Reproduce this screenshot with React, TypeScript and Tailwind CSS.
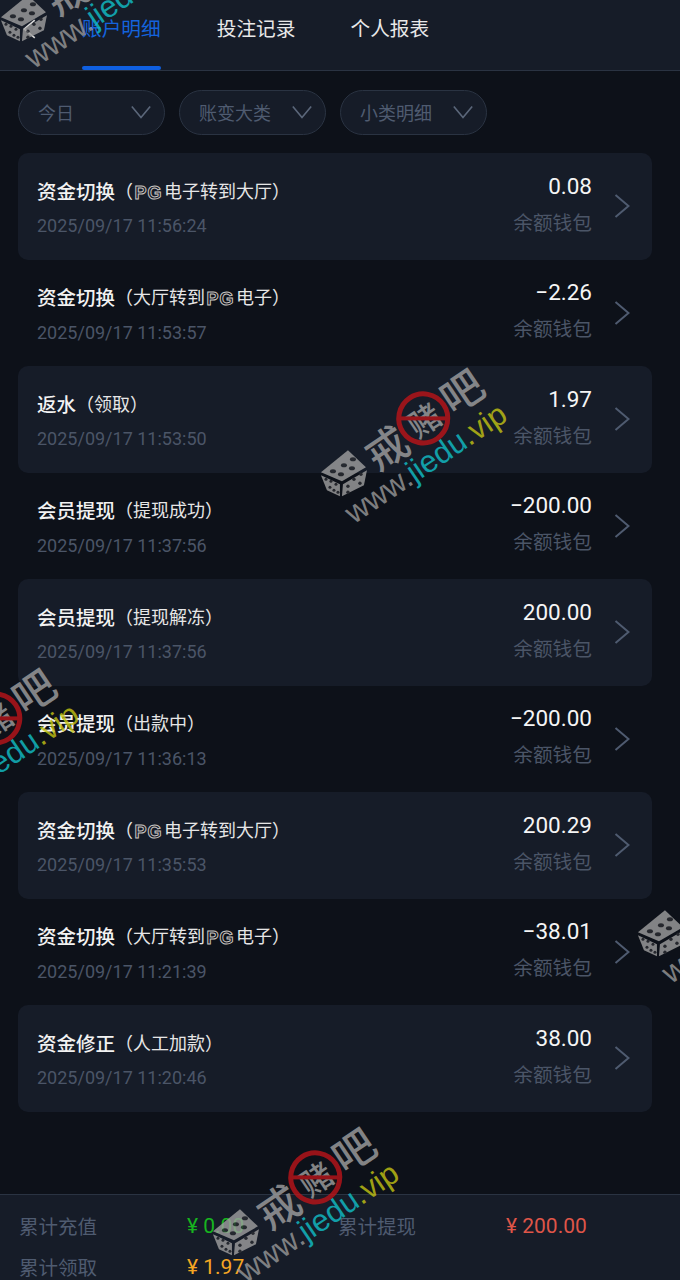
const ROWS = [
  { title: '资金切换', kind: 'out', time: '2025/09/17 11:56:24', amount: '0.08' },
  { title: '资金切换', kind: 'in', time: '2025/09/17 11:53:57', amount: '−2.26' },
  { title: '返水', note: '（领取）', time: '2025/09/17 11:53:50', amount: '1.97' },
  { title: '会员提现', note: '（提现成功）', time: '2025/09/17 11:37:56', amount: '−200.00' },
  { title: '会员提现', note: '（提现解冻）', time: '2025/09/17 11:37:56', amount: '200.00' },
  { title: '会员提现', note: '（出款中）', time: '2025/09/17 11:36:13', amount: '−200.00' },
  { title: '资金切换', kind: 'out', time: '2025/09/17 11:35:53', amount: '200.29' },
  { title: '资金切换', kind: 'in', time: '2025/09/17 11:21:39', amount: '−38.01' },
  { title: '资金修正', note: '（人工加款）', time: '2025/09/17 11:20:46', amount: '38.00' },
]

const WATERMARKS = [
  'left-[-10px] top-[-62px]',
  'left-[310px] top-[393px]',
  'left-[-118px] top-[693px]',
  'left-[202px] top-[1152px]',
  'left-[627px] top-[853px]',
]

function PgLogo() {
  return (
    <span className="inline-block w-[31px] text-center align-[-1px] font-['Liberation_Sans',sans-serif] text-[18px] leading-none font-bold tracking-[1px] text-transparent [-webkit-text-stroke:1px_#c9c4c0]">
      PG
    </span>
  )
}

function Chevron({ className }: { className: string }) {
  return (
    <svg className={className} viewBox="0 0 16 24" fill="none" stroke="currentColor" strokeWidth="2">
      <path d="M1.5 1 L14.5 12 L1.5 23" />
    </svg>
  )
}

function Dice() {
  return (
    <svg className="h-[50px] w-[50px] shrink-0 rotate-[34deg]" viewBox="0 0 50 50">
      <path d="M2 23 L29 1 L47 18 L23 32 Z" fill="#a0a0a0" />
      <path d="M2 26 L21 35 L21 47 L8 41 Z" fill="#a0a0a0" />
      <path d="M24 35 L48 21 L45 36 L23 47 Z" fill="#a0a0a0" />
      <g fill="#2b2d33">
        <ellipse cx="14" cy="22" rx="3" ry="2" />
        <ellipse cx="25" cy="16" rx="3" ry="2" />
        <ellipse cx="34" cy="10" rx="3" ry="2" />
        <ellipse cx="22" cy="25" rx="3" ry="2" />
        <ellipse cx="33" cy="19" rx="3" ry="2" />
        <circle cx="7" cy="30" r="1.5" />
        <circle cx="12" cy="32" r="1.5" />
        <circle cx="17" cy="35" r="1.5" />
        <circle cx="11" cy="38" r="1.5" />
        <circle cx="15" cy="41" r="1.5" />
        <circle cx="19" cy="43" r="1.5" />
        <circle cx="29" cy="37" r="1.7" />
        <circle cx="35" cy="30" r="1.7" />
        <circle cx="42" cy="25" r="1.7" />
        <circle cx="29" cy="43" r="1.7" />
        <circle cx="41" cy="34" r="1.7" />
      </g>
    </svg>
  )
}

function Watermark({ place }: { place: string }) {
  return (
    <div className={`pointer-events-none absolute flex w-[230px] origin-center -rotate-[34deg] flex-col items-start opacity-80 ${place}`}>
      <div className="flex items-center">
        <Dice />
        <span className="ml-[4px] text-[42px] leading-none font-medium text-[#a0a0a0]">戒</span>
        <span className="relative mb-[3px] ml-[-1px] flex h-[54px] w-[54px] shrink-0 items-center justify-center rounded-full border-[5px] border-[#bb1419] text-[32px] leading-none font-medium text-[#a0a0a0]">
          赌
          <span className="absolute left-[-2px] right-[-2px] top-[20px] h-[4px] rotate-[34deg] bg-[#bb1419]" />
        </span>
        <span className="mb-[10px] ml-[-1px] text-[42px] leading-none font-medium text-[#a0a0a0]">吧</span>
      </div>
      <div className="ml-[5px] mt-[-7px] whitespace-nowrap font-['Liberation_Sans',sans-serif] text-[31px] leading-none">
        <span className="text-[#989898]">www.</span>
        <span className="text-[#12c0c8]">jiedu</span>
        <span className="text-[#c4c414]">.vip</span>
      </div>
    </div>
  )
}

export default function App() {
  return (
    <div className="relative h-[1280px] w-[680px] overflow-hidden bg-[#0d1119] font-['Noto_Sans_CJK_SC',sans-serif]">
      {/* Tabs */}
      <div className="relative flex h-[71px] border-b border-[#2a3342] bg-[#161c28] text-[19.7px]">
        <Chevron className="absolute left-[23px] top-[19px] h-[20px] w-[13px] scale-x-[-1] text-[#d8d8d8]" />
        <div className="relative ml-[82px] pt-[13px] text-[#1463dc]">
          账户明细
          <span className="absolute bottom-[0px] left-0 right-0 h-[4px] rounded-[2px] bg-[#0f5fe0]" />
        </div>
        <div className="ml-[56px] pt-[13px] text-[#e8e8e8]">投注记录</div>
        <div className="ml-[55px] pt-[13px] text-[#e8e8e8]">个人报表</div>
      </div>

      {/* Filters */}
      <div className="ml-[18px] mt-[19px] flex gap-[14px]">
        {['今日', '账变大类', '小类明细'].map((label) => (
          <div key={label} className="flex h-[45px] w-[147px] items-center justify-between rounded-[23px] border border-[#2a3342] bg-[#161c28] pb-[1px] pl-[19px] pr-[16px] text-[18px] text-[#4f5b70]">
            {label}
            <Chevron className="h-[20px] w-[14px] rotate-90 text-[#5a6679]" />
          </div>
        ))}
      </div>

      {/* Records */}
      <div className="ml-[18px] mr-[28px] mt-[18px] flex flex-col">
        {ROWS.map((row, i) => (
          <div key={row.time + i} className={`flex h-[106.5px] items-center rounded-[10px] pl-[19px] pr-[22px] ${i % 2 === 0 ? 'bg-[#161c28]' : ''}`}>
            <div className="mt-[2px] flex-1">
              <div className="flex h-[28px] items-center whitespace-nowrap text-[18px] text-[#e6e6e6]">
                <span className="text-[19.5px] font-medium text-[#f2f2f2]">{row.title}</span>
                {row.kind === 'out' && <span>（<PgLogo />电子转到大厅）</span>}
                {row.kind === 'in' && <span>（大厅转到<PgLogo />电子）</span>}
                {row.note && <span>{row.note}</span>}
              </div>
              <div className="mt-[10px] font-['Roboto',sans-serif] text-[18px] leading-[24px] text-[#4b5567]">{row.time}</div>
            </div>
            <div className="mb-[5px] mr-[22px] text-right">
              <div className="font-['Roboto',sans-serif] text-[22.5px] leading-[28px] text-[#f5f5f5]">{row.amount}</div>
              <div className="mt-[8px] text-[19.7px] leading-[28px] text-[#4b5567]">余额钱包</div>
            </div>
            <Chevron className="h-[24px] w-[16px] text-[#4f5b70]" />
          </div>
        ))}
      </div>

      {/* Totals */}
      <div className="absolute left-0 right-0 top-[1194px] grid h-[100px] grid-cols-[168px_151px_168px_1fr] content-start border-t border-[#2a3342] bg-[#161c28] pl-[19px] pt-[15px] text-[19.5px] leading-[32px] text-[#4f5b70]">
        <span>累计充值</span>
        <span className="font-['Roboto',sans-serif] text-[21px] text-[#17b51f]">¥ 0.00</span>
        <span>累计提现</span>
        <span className="font-['Roboto',sans-serif] text-[21px] text-[#df5548]">¥ 200.00</span>
        <span className="mt-[9px]">累计领取</span>
        <span className="mt-[9px] font-['Roboto',sans-serif] text-[21px] text-[#f5a623]">¥ 1.97</span>
      </div>

      {WATERMARKS.map((place) => (
        <Watermark key={place} place={place} />
      ))}
    </div>
  )
}
